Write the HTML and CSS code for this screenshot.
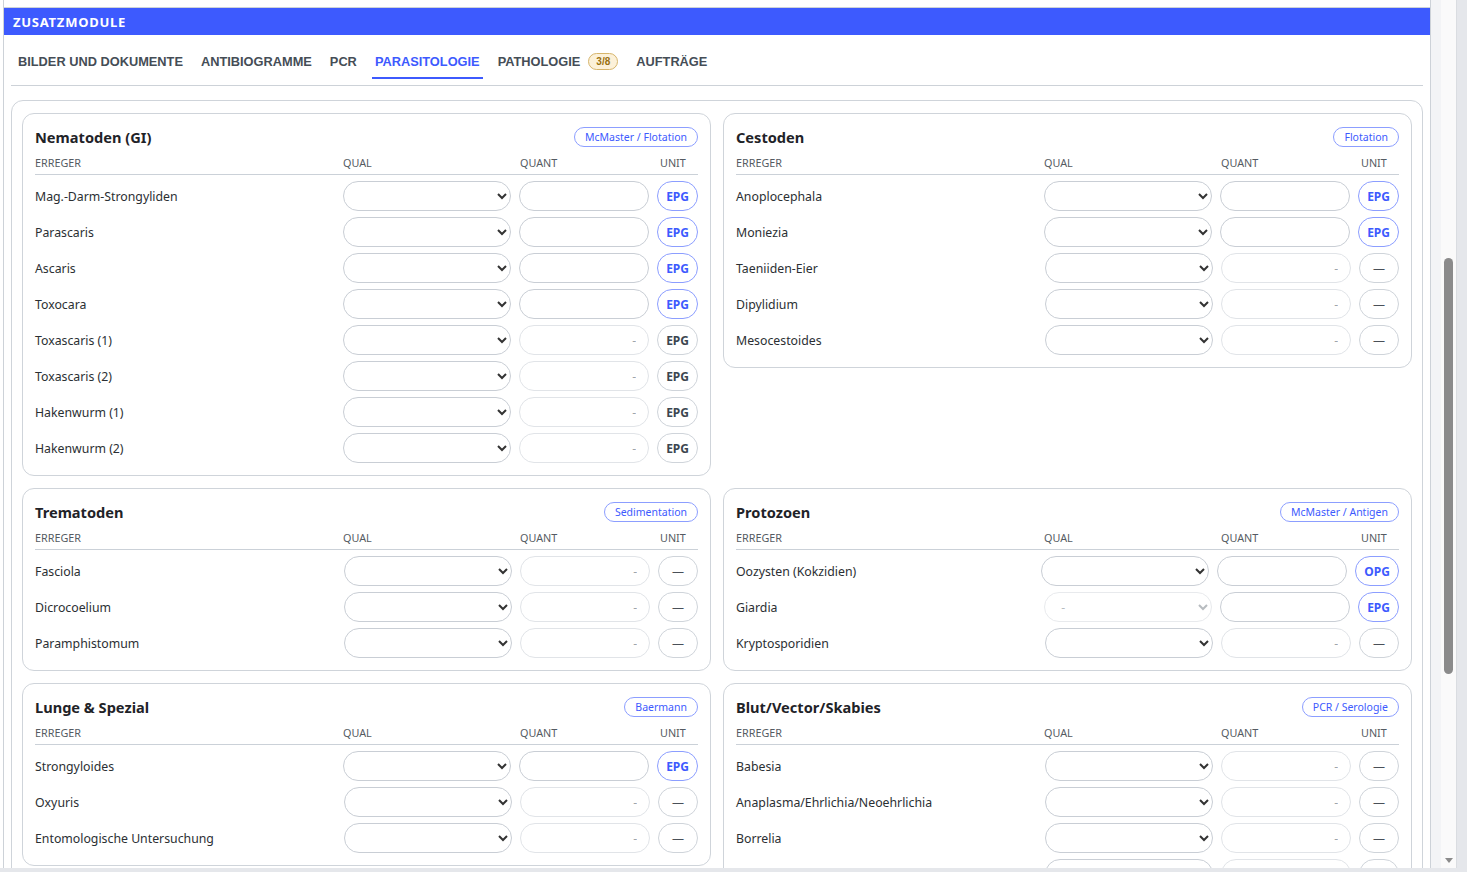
FILE: index.html
```html
<!DOCTYPE html>
<html lang="de">
<head>
<meta charset="utf-8">
<title>Zusatzmodule – Parasitologie</title>
<link rel="stylesheet" href="styles.css">
</head>
<body>
<div class="app">
  <div class="viewport">
    <div class="page">
      <div class="panel">
        <div class="panel-header">ZUSATZMODULE</div>
        <nav class="tabs">
          <div class="tab">BILDER UND DOKUMENTE</div>
          <div class="tab">ANTIBIOGRAMME</div>
          <div class="tab">PCR</div>
          <div class="tab active">PARASITOLOGIE</div>
          <div class="tab">PATHOLOGIE <span class="count">3/8</span></div>
          <div class="tab">AUFTRÄGE</div>
        </nav>
        <div class="content">
          <!-- Nematoden -->
          <section class="card">
            <div class="card-head"><h3 class="card-title">Nematoden (GI)</h3><span class="method">McMaster / Flotation</span></div>
            <div class="cols"><span class="c-name">Erreger</span><span class="c-qual">Qual</span><span class="c-quant">Quant</span><span class="c-unit">Unit</span></div>
            <div class="rows">
              <div class="row"><span class="name">Mag.-Darm-Strongyliden</span><select class="qual"><option></option></select><input class="quant" type="text"><button class="unit on">EPG</button></div>
              <div class="row"><span class="name">Parascaris</span><select class="qual"><option></option></select><input class="quant" type="text"><button class="unit on">EPG</button></div>
              <div class="row"><span class="name">Ascaris</span><select class="qual"><option></option></select><input class="quant" type="text"><button class="unit on">EPG</button></div>
              <div class="row"><span class="name">Toxocara</span><select class="qual"><option></option></select><input class="quant" type="text"><button class="unit on">EPG</button></div>
              <div class="row"><span class="name">Toxascaris (1)</span><select class="qual"><option></option></select><input class="quant" type="text" disabled placeholder="-"><button class="unit">EPG</button></div>
              <div class="row"><span class="name">Toxascaris (2)</span><select class="qual"><option></option></select><input class="quant" type="text" disabled placeholder="-"><button class="unit">EPG</button></div>
              <div class="row"><span class="name">Hakenwurm (1)</span><select class="qual"><option></option></select><input class="quant" type="text" disabled placeholder="-"><button class="unit">EPG</button></div>
              <div class="row"><span class="name">Hakenwurm (2)</span><select class="qual"><option></option></select><input class="quant" type="text" disabled placeholder="-"><button class="unit">EPG</button></div>
            </div>
          </section>
          <!-- Cestoden -->
          <section class="card">
            <div class="card-head"><h3 class="card-title">Cestoden</h3><span class="method">Flotation</span></div>
            <div class="cols"><span class="c-name">Erreger</span><span class="c-qual">Qual</span><span class="c-quant">Quant</span><span class="c-unit">Unit</span></div>
            <div class="rows">
              <div class="row"><span class="name">Anoplocephala</span><select class="qual"><option></option></select><input class="quant" type="text"><button class="unit on">EPG</button></div>
              <div class="row"><span class="name">Moniezia</span><select class="qual"><option></option></select><input class="quant" type="text"><button class="unit on">EPG</button></div>
              <div class="row"><span class="name">Taeniiden-Eier</span><select class="qual"><option></option></select><input class="quant" type="text" disabled placeholder="-"><button class="unit none">—</button></div>
              <div class="row"><span class="name">Dipylidium</span><select class="qual"><option></option></select><input class="quant" type="text" disabled placeholder="-"><button class="unit none">—</button></div>
              <div class="row"><span class="name">Mesocestoides</span><select class="qual"><option></option></select><input class="quant" type="text" disabled placeholder="-"><button class="unit none">—</button></div>
            </div>
          </section>
          <!-- Trematoden -->
          <section class="card">
            <div class="card-head"><h3 class="card-title">Trematoden</h3><span class="method">Sedimentation</span></div>
            <div class="cols"><span class="c-name">Erreger</span><span class="c-qual">Qual</span><span class="c-quant">Quant</span><span class="c-unit">Unit</span></div>
            <div class="rows">
              <div class="row"><span class="name">Fasciola</span><select class="qual"><option></option></select><input class="quant" type="text" disabled placeholder="-"><button class="unit none">—</button></div>
              <div class="row"><span class="name">Dicrocoelium</span><select class="qual"><option></option></select><input class="quant" type="text" disabled placeholder="-"><button class="unit none">—</button></div>
              <div class="row"><span class="name">Paramphistomum</span><select class="qual"><option></option></select><input class="quant" type="text" disabled placeholder="-"><button class="unit none">—</button></div>
            </div>
          </section>
          <!-- Protozoen -->
          <section class="card">
            <div class="card-head"><h3 class="card-title">Protozoen</h3><span class="method">McMaster / Antigen</span></div>
            <div class="cols"><span class="c-name">Erreger</span><span class="c-qual">Qual</span><span class="c-quant">Quant</span><span class="c-unit">Unit</span></div>
            <div class="rows">
              <div class="row"><span class="name">Oozysten (Kokzidien)</span><select class="qual"><option></option></select><input class="quant" type="text"><button class="unit on">OPG</button></div>
              <div class="row"><span class="name">Giardia</span><select class="qual" disabled><option>-</option></select><input class="quant" type="text"><button class="unit on">EPG</button></div>
              <div class="row"><span class="name">Kryptosporidien</span><select class="qual"><option></option></select><input class="quant" type="text" disabled placeholder="-"><button class="unit none">—</button></div>
            </div>
          </section>
          <!-- Lunge & Spezial -->
          <section class="card">
            <div class="card-head"><h3 class="card-title">Lunge &amp; Spezial</h3><span class="method">Baermann</span></div>
            <div class="cols"><span class="c-name">Erreger</span><span class="c-qual">Qual</span><span class="c-quant">Quant</span><span class="c-unit">Unit</span></div>
            <div class="rows">
              <div class="row"><span class="name">Strongyloides</span><select class="qual"><option></option></select><input class="quant" type="text"><button class="unit on">EPG</button></div>
              <div class="row"><span class="name">Oxyuris</span><select class="qual"><option></option></select><input class="quant" type="text" disabled placeholder="-"><button class="unit none">—</button></div>
              <div class="row"><span class="name">Entomologische Untersuchung</span><select class="qual"><option></option></select><input class="quant" type="text" disabled placeholder="-"><button class="unit none">—</button></div>
            </div>
          </section>
          <!-- Blut/Vector/Skabies -->
          <section class="card">
            <div class="card-head"><h3 class="card-title">Blut/Vector/Skabies</h3><span class="method">PCR / Serologie</span></div>
            <div class="cols"><span class="c-name">Erreger</span><span class="c-qual">Qual</span><span class="c-quant">Quant</span><span class="c-unit">Unit</span></div>
            <div class="rows">
              <div class="row"><span class="name">Babesia</span><select class="qual"><option></option></select><input class="quant" type="text" disabled placeholder="-"><button class="unit none">—</button></div>
              <div class="row"><span class="name">Anaplasma/Ehrlichia/Neoehrlichia</span><select class="qual"><option></option></select><input class="quant" type="text" disabled placeholder="-"><button class="unit none">—</button></div>
              <div class="row"><span class="name">Borrelia</span><select class="qual"><option></option></select><input class="quant" type="text" disabled placeholder="-"><button class="unit none">—</button></div>
              <div class="row"><span class="name">Dirofilaria</span><select class="qual"><option></option></select><input class="quant" type="text" disabled placeholder="-"><button class="unit none">—</button></div>
            </div>
          </section>
        </div>
      </div>
    </div>
  </div>
  <div class="scrollbar">
    <div class="thumb"></div>
    <div class="arrow-down"></div>
  </div>
</div>
</body>
</html>
```

FILE: styles.css
```css
* { box-sizing: border-box; }

html, body {
  margin: 0;
  height: 872px;
  overflow: hidden;
}

body {
  background: #e5e7eb;
  font-family: "Noto Sans", "Open Sans", sans-serif;
  color: #2b2f33;
}

.app {
  display: flex;
  width: 1457px;
  height: 868px;
}

.viewport {
  width: 1441px;
  height: 868px;
  overflow: hidden;
  background: #f3f4f6;
}

.page {
  width: 1431px;
  min-height: 100%;
  background: #fff;
  padding-left: 3px;
}

.panel {
  border-left: 1px solid #cdd2d8;
  border-right: 1px solid #cdd2d8;
  padding-top: 7px;
  min-height: 868px;
}

.panel-header {
  border-top: 1px solid #cdd2d8;
  background: #3d5afe;
  height: 28px;
  color: #fff;
  display: flex;
  align-items: center;
  padding-left: 9px;
  font-weight: 700;
  font-size: 13px;
  letter-spacing: 0.75px;
}

.tabs {
  margin: 0 7px;
  padding: 11px 4px 6px;
  display: flex;
  gap: 12px;
  border-bottom: 1px solid #cdd2d8;
}

.tab {
  font-family: "Liberation Sans", Arial, sans-serif;
  font-weight: 700;
  font-size: 12.8px;
  line-height: 16px;
  color: #454d56;
  padding: 7px 3px;
  border-bottom: 2px solid transparent;
  display: flex;
  align-items: center;
}

.tab.active {
  color: #3d5afe;
  border-bottom-color: #3d5afe;
}

.count {
  margin-left: 8px;
  height: 17px;
  padding: 0 7px;
  border-radius: 9px;
  border: 1px solid #d6b56c;
  background: #fcf1d9;
  color: #98700f;
  font-size: 10px;
  font-weight: 700;
  display: inline-flex;
  align-items: center;
}

.content {
  margin: 14px 7px 0;
  border: 1px solid #cfd4da;
  border-radius: 12px;
  padding: 12px 10px;
  display: grid;
  grid-template-columns: 1fr 1fr;
  gap: 12px;
  align-items: start;
}

.card {
  border: 1px solid #cfd4da;
  border-radius: 12px;
  padding: 13px 12px 9px;
}

.card-head {
  display: flex;
  justify-content: space-between;
  align-items: center;
  height: 20px;
}

.card-title {
  margin: 0;
  font-size: 14.6px;
  font-weight: 700;
  color: #1f2328;
  line-height: 20px;
}

.method {
  font-size: 10.5px;
  color: #3d5afe;
  border: 1px solid #8c9eff;
  border-radius: 10px;
  height: 20px;
  padding: 0 10px;
  display: flex;
  align-items: center;
}

.cols {
  display: flex;
  gap: 8px;
  margin-top: 8px;
  padding-bottom: 4px;
  border-bottom: 1px solid #cbd1d8;
  font-size: 10.8px;
  line-height: 15px;
  color: #555b62;
  text-transform: uppercase;
}

.c-name { flex: 1; }
.c-qual { width: 168px; padding-left: 1px; }
.c-quant { width: 130px; padding-left: 2px; }
.c-unit { width: 42px; padding-left: 4px; }

.rows {
  margin-top: 3px;
}

.row {
  display: flex;
  align-items: center;
  gap: 8px;
  height: 36px;
}

.name {
  flex: 1;
  font-size: 12.3px;
  color: #2b2f33;
}

.qual {
  width: 168px;
  height: 30px;
  border: 1px solid #c9ced5;
  border-radius: 15px;
  background: #fff;
  font-family: inherit;
  font-size: 12px;
  padding: 0 8px 0 12px;
  color: #333;
}

.qual:disabled {
  border-color: #dfe2e6;
  color: #9aa0a6;
}

.quant {
  width: 130px;
  height: 30px;
  border: 1px solid #c9ced5;
  border-radius: 15px;
  background: #fff;
  padding: 0 12px;
  text-align: right;
  font-family: inherit;
  font-size: 12px;
}

.quant:disabled {
  border-color: #e1e4e8;
  background: #fff;
}

.quant::placeholder {
  color: #a0a5ab;
}

.unit {
  min-width: 40px;
  height: 30px;
  border-radius: 15px;
  border: 1px solid #cfd4da;
  background: #fff;
  padding: 0 8px;
  font-family: inherit;
  font-size: 12px;
  font-weight: 700;
  color: #3c4650;
}

.unit.on {
  border-color: #8c9eff;
  color: #3d5afe;
}

.unit.none {
  font-weight: 400;
  color: #4a5058;
}

.scrollbar {
  width: 16px;
  height: 868px;
  background: #fafafa;
  border-right: 1px solid #dadde1;
  display: flex;
  flex-direction: column;
  align-items: center;
}

.thumb {
  margin-top: 258px;
  width: 9px;
  height: 416px;
  border-radius: 5px;
  background: #8b8b8b;
}

.arrow-down {
  margin-top: auto;
  margin-bottom: 5px;
  width: 0;
  height: 0;
  border-left: 4px solid transparent;
  border-right: 4px solid transparent;
  border-top: 5px solid #8b8b8b;
}
```
